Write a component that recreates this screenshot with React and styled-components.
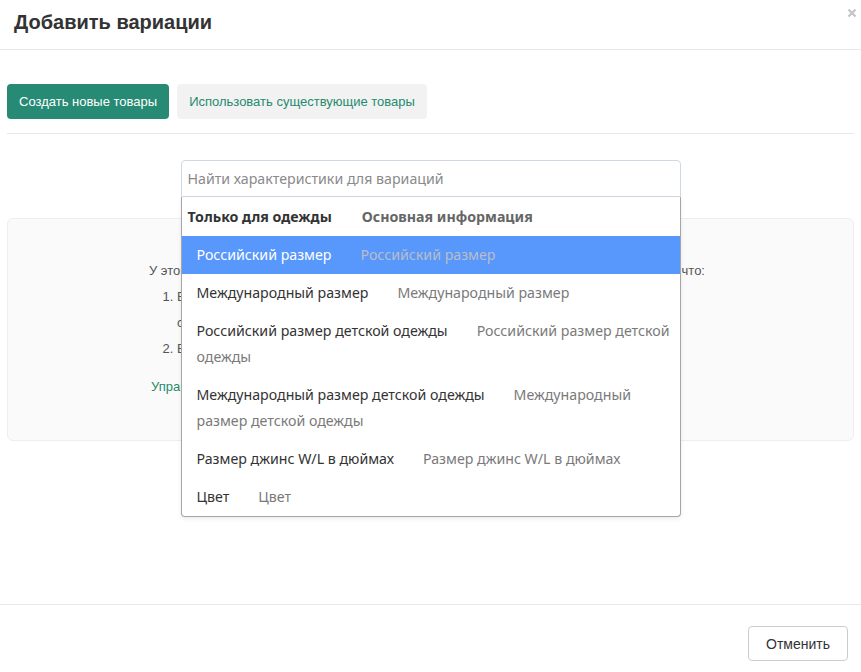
import React from "react";
import styled, { createGlobalStyle } from "styled-components";

const GlobalStyle = createGlobalStyle`
  html, body {
    margin: 0;
    padding: 0;
    background: #fff;
    font-family: "Liberation Sans", Arial, sans-serif;
  }
`;

const Modal = styled.div`
  position: relative;
  display: flex;
  flex-direction: column;
  height: 100vh;
  background: #fff;
`;

const Header = styled.div`
  height: 50px;
  display: flex;
  align-items: center;
  padding: 0 14px;
  border-bottom: 1px solid #e8e8e8;
  box-sizing: border-box;
`;

const Title = styled.h2`
  margin: 0;
  margin-top: -5px;
  font-size: 20px;
  font-weight: bold;
  color: #333;
`;

const Close = styled.button`
  position: absolute;
  top: 6px;
  right: 2px;
  border: 0;
  background: none;
  padding: 2px;
  cursor: pointer;
  line-height: 0;
`;

const Body = styled.div`
  flex: 1;
  padding: 34px 7px 0;
`;

const Tabs = styled.div`
  display: flex;
  gap: 8px;
  padding-bottom: 14px;
  border-bottom: 1px solid #e8e8e8;
`;

const TabButton = styled.button`
  height: 35px;
  padding: 0 12px;
  border: 0;
  border-radius: 4px;
  font-family: "Liberation Sans", Arial, sans-serif;
  font-size: 13px;
  cursor: pointer;
  background: ${p => (p.active ? "#268a75" : "#f2f2f2")};
  color: ${p => (p.active ? "#fff" : "#268a70")};
`;

const SearchArea = styled.div`
  position: relative;
  width: 500px;
  margin: 26px auto 0;
  z-index: 2;
`;

const SearchInput = styled.input`
  display: block;
  width: 100%;
  height: 37px;
  box-sizing: border-box;
  border: 1px solid #cfd8e2;
  border-radius: 4px 4px 0 0;
  padding: 0 6px;
  font-family: "Noto Sans", "Open Sans", sans-serif;
  font-size: 14.2px;
  color: #333;
  outline: 0;
  &::placeholder {
    color: #8a8a8a;
  }
`;

const Dropdown = styled.div`
  position: absolute;
  top: 37px;
  left: 0;
  right: 0;
  background: #fff;
  border: 1px solid #a6a6a6;
  border-top: 0;
  border-radius: 0 0 4px 4px;
  box-shadow: 0 2px 4px rgba(0, 0, 0, 0.08);
  font-family: "Noto Sans", "Open Sans", sans-serif;
  font-size: 14.2px;
  line-height: 26px;
`;

const GroupHeader = styled.div`
  padding: 7px 6px 6px;
  font-weight: bold;
  color: #333;
`;

const GroupName = styled.span`
  margin-left: 30px;
  color: #666;
`;

const Option = styled.div`
  padding: 6px 5px 6px 15px;
  color: ${p => (p.highlighted ? "#fff" : "#333")};
  background: ${p => (p.highlighted ? "#5897fb" : "transparent")};
`;

const OptionGroup = styled.span`
  margin-left: 29px;
  color: ${p => (p.highlighted ? "#b9bec8" : "#7a7a7a")};
`;

const InfoPanel = styled.div`
  margin-top: 21px;
  height: 223px;
  box-sizing: border-box;
  background: #fafafa;
  border: 1px solid #eee;
  border-radius: 6px;
  padding-top: 39px;
`;

const InfoText = styled.div`
  width: 570px;
  margin: 0 auto;
  padding-left: 7px;
  font-size: 13px;
  line-height: 26px;
  color: #555;
`;

const Para = styled.p`
  margin: 0;
  width: 556px;
  display: flex;
  justify-content: space-between;
  white-space: nowrap;
`;

const Steps = styled.ol`
  margin: 0;
  padding-left: 28px;
  max-width: 470px;
`;

const InfoLink = styled.a`
  display: inline-block;
  margin-top: 12px;
  margin-left: 2px;
  color: #1f8a70;
  text-decoration: none;
`;

const Footer = styled.div`
  height: 68px;
  box-sizing: border-box;
  border-top: 1px solid #e8e8e8;
  display: flex;
  justify-content: flex-end;
  align-items: flex-start;
  padding: 21px 13px 0;
`;

const CancelButton = styled.button`
  height: 35px;
  padding: 0 17px;
  background: #fff;
  border: 1px solid #ccc;
  border-radius: 4px;
  font-family: "Liberation Sans", Arial, sans-serif;
  font-size: 14px;
  color: #333;
  cursor: pointer;
`;

const options = [
  { name: "Российский размер", highlighted: true },
  { name: "Международный размер" },
  { name: "Российский размер детской одежды" },
  { name: "Международный размер детской одежды" },
  { name: "Размер джинс W/L в дюймах" },
  { name: "Цвет" }
];

export default function App() {
  return (
    <Modal>
      <GlobalStyle />
      <Header>
        <Title>Добавить вариации</Title>
      </Header>
      <Close aria-label="Закрыть">
        <svg width="10" height="10" viewBox="0 0 10 10">
          <path d="M1.5 1.5 L8.5 8.5 M8.5 1.5 L1.5 8.5" stroke="#c4c4c4" strokeWidth="2.2" />
        </svg>
      </Close>
      <Body>
        <Tabs>
          <TabButton active>Создать новые товары</TabButton>
          <TabButton>Использовать существующие товары</TabButton>
        </Tabs>
        <SearchArea>
          <SearchInput placeholder="Найти характеристики для вариаций" />
          <Dropdown>
            <GroupHeader>
              Только для одежды
              <GroupName>Основная информация</GroupName>
            </GroupHeader>
            {options.map(o => (
              <Option key={o.name} highlighted={o.highlighted}>
                {o.name}
                <OptionGroup highlighted={o.highlighted}>{o.name}</OptionGroup>
              </Option>
            ))}
          </Dropdown>
        </SearchArea>
        <InfoPanel>
          <InfoText>
            <Para>
              <span>У этого товара уже есть вариации.</span>
              <span>Чтобы добавить новые, убедитесь, что:</span>
            </Para>
            <Steps>
              <li>
                Выбранные характеристики не используются в других вариациях,
                <br />
                связанных с этим товаром
              </li>
              <li>Все вариации находятся в одной категории</li>
            </Steps>
            <InfoLink href="#">Управление вариациями</InfoLink>
          </InfoText>
        </InfoPanel>
      </Body>
      <Footer>
        <CancelButton>Отменить</CancelButton>
      </Footer>
    </Modal>
  );
}
